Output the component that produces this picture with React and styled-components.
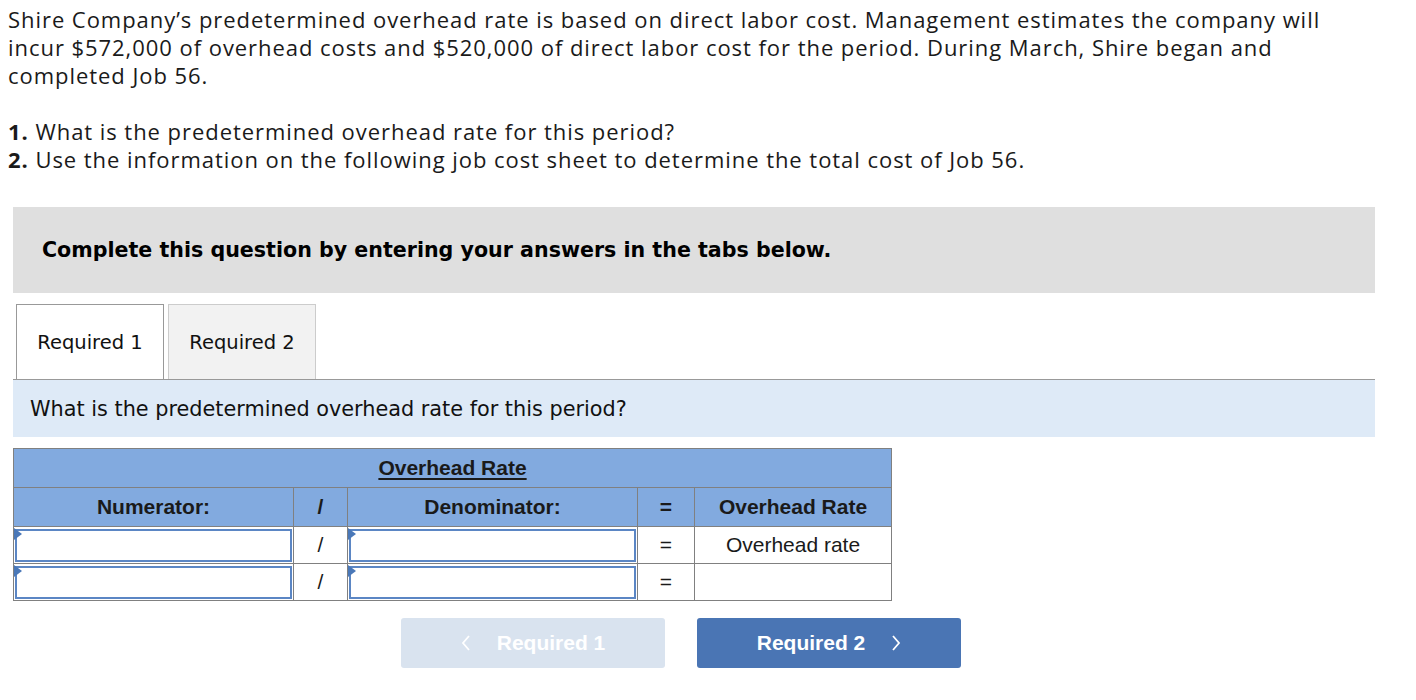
import React from "react";
import styled, { createGlobalStyle } from "styled-components";

const GlobalStyle = createGlobalStyle`
  body {
    margin: 0;
    padding: 5px 8px 0 8px;
    background: #fff;
    color: #111;
  }
`;

const Prompt = styled.div`
  font-family: "Open Sans", Lato, sans-serif;
  font-size: 22px;
  letter-spacing: 0.95px;
  line-height: 28px;
  color: #1a1a1a;
  white-space: nowrap;
  p {
    margin: 0 0 28px 0;
  }
  b {
    font-weight: 700;
  }
`;

const Wrap = styled.div`
  margin: 34px 0 0 5px;
  width: 1362px;
`;

const Banner = styled.div`
  background: #dfdfdf;
  height: 86px;
  display: flex;
  align-items: center;
  padding: 0 29px;
  font-family: "DejaVu Sans", Verdana, sans-serif;
  font-weight: 700;
  font-size: 20.6px;
  color: #000;
`;

const TabBar = styled.div`
  display: flex;
  gap: 4px;
  margin-top: 11px;
  padding-left: 3px;
  border-bottom: 1px solid #999;
`;

const Tab = styled.div`
  width: 148px;
  height: 75px;
  box-sizing: border-box;
  display: flex;
  align-items: center;
  justify-content: center;
  font-family: "DejaVu Sans", Verdana, sans-serif;
  font-size: 19.5px;
  color: #111;
  background: ${(p) => (p.$active ? "#fff" : "#f2f2f2")};
  border: 1px solid ${(p) => (p.$active ? "#999" : "#ccc")};
  border-bottom: none;
  margin-bottom: ${(p) => (p.$active ? "-1px" : "0")};
`;

const Question = styled.div`
  background: #deeaf7;
  height: 57px;
  display: flex;
  align-items: center;
  padding-left: 17px;
  font-family: "DejaVu Sans", Verdana, sans-serif;
  font-size: 20.8px;
  color: #111;
`;

const Table = styled.table`
  margin-top: 11px;
  border-collapse: collapse;
  width: 879px;
  table-layout: fixed;
  font-family: "Liberation Sans", Arial, sans-serif;
  font-size: 21px;
  color: #1a1a1a;
  td,
  th {
    border: 1px solid #808080;
    padding: 0;
    text-align: center;
  }
`;

const HeadCell = styled.th`
  background: #82aadf;
  font-weight: 700;
  height: 38px;
  text-decoration: ${(p) => (p.$underline ? "underline" : "none")};
  text-underline-offset: 3px;
`;

const Cell = styled.td`
  height: 36px;
  background: #fff;
  font-weight: 400;
`;

const InputCell = styled.td`
  height: 36px;
  position: relative;
  background: #fff;
`;

const Entry = styled.div`
  margin: 1px;
  height: 33px;
  box-sizing: border-box;
  border: 2px solid #5b86c4;
  background: #fff;
`;

const Flag = styled.span`
  position: absolute;
  left: 0;
  top: 1px;
  width: 0;
  height: 0;
  border-top: 6px solid transparent;
  border-bottom: 6px solid transparent;
  border-left: 8px solid #4a78b8;
`;

const Nav = styled.div`
  display: flex;
  gap: 32px;
  margin-top: 17px;
  padding-left: 388px;
`;

const NavButton = styled.div`
  width: 264px;
  height: 50px;
  border-radius: 3px;
  display: flex;
  align-items: center;
  justify-content: center;
  gap: 26px;
  font-family: "Liberation Sans", Arial, sans-serif;
  font-weight: 700;
  font-size: 21px;
  color: #fff;
  background: ${(p) => (p.$disabled ? "#d9e3ef" : "#4a75b4")};
  svg {
    display: block;
  }
`;

const Chevron = ({ dir }) => (
  <svg width="10" height="16" viewBox="0 0 10 16">
    <path
      d={dir === "left" ? "M8 1 L2 8 L8 15" : "M2 1 L8 8 L2 15"}
      fill="none"
      stroke="#fff"
      strokeWidth="1.8"
    />
  </svg>
);

const InputBox = () => (
  <InputCell>
    <Flag />
    <Entry />
  </InputCell>
);

export default function App() {
  return (
    <>
      <GlobalStyle />
      <Prompt>
        <p>
          Shire Company’s predetermined overhead rate is based on direct labor cost. Management estimates the company will
          <br />
          incur $572,000 of overhead costs and $520,000 of direct labor cost for the period. During March, Shire began and
          <br />
          completed Job 56.
        </p>
        <div>
          <b>1.</b> What is the predetermined overhead rate for this period?
        </div>
        <div>
          <b>2.</b> Use the information on the following job cost sheet to determine the total cost of Job 56.
        </div>
      </Prompt>
      <Wrap>
        <Banner>Complete this question by entering your answers in the tabs below.</Banner>
        <TabBar>
          <Tab $active>Required 1</Tab>
          <Tab>Required 2</Tab>
        </TabBar>
        <Question>What is the predetermined overhead rate for this period?</Question>
        <Table>
          <colgroup>
            <col style={{ width: 280 }} />
            <col style={{ width: 54 }} />
            <col style={{ width: 290 }} />
            <col style={{ width: 57 }} />
            <col style={{ width: 197 }} />
          </colgroup>
          <thead>
            <tr>
              <HeadCell colSpan={5} $underline>
                Overhead Rate
              </HeadCell>
            </tr>
            <tr>
              <HeadCell>Numerator:</HeadCell>
              <HeadCell>/</HeadCell>
              <HeadCell>Denominator:</HeadCell>
              <HeadCell>=</HeadCell>
              <HeadCell>Overhead Rate</HeadCell>
            </tr>
          </thead>
          <tbody>
            <tr>
              <InputBox />
              <Cell>/</Cell>
              <InputBox />
              <Cell>=</Cell>
              <Cell>Overhead rate</Cell>
            </tr>
            <tr>
              <InputBox />
              <Cell>/</Cell>
              <InputBox />
              <Cell>=</Cell>
              <Cell />
            </tr>
          </tbody>
        </Table>
        <Nav>
          <NavButton $disabled>
            <Chevron dir="left" />
            <span>Required 1</span>
          </NavButton>
          <NavButton>
            <span>Required 2</span>
            <Chevron dir="right" />
          </NavButton>
        </Nav>
      </Wrap>
    </>
  );
}
